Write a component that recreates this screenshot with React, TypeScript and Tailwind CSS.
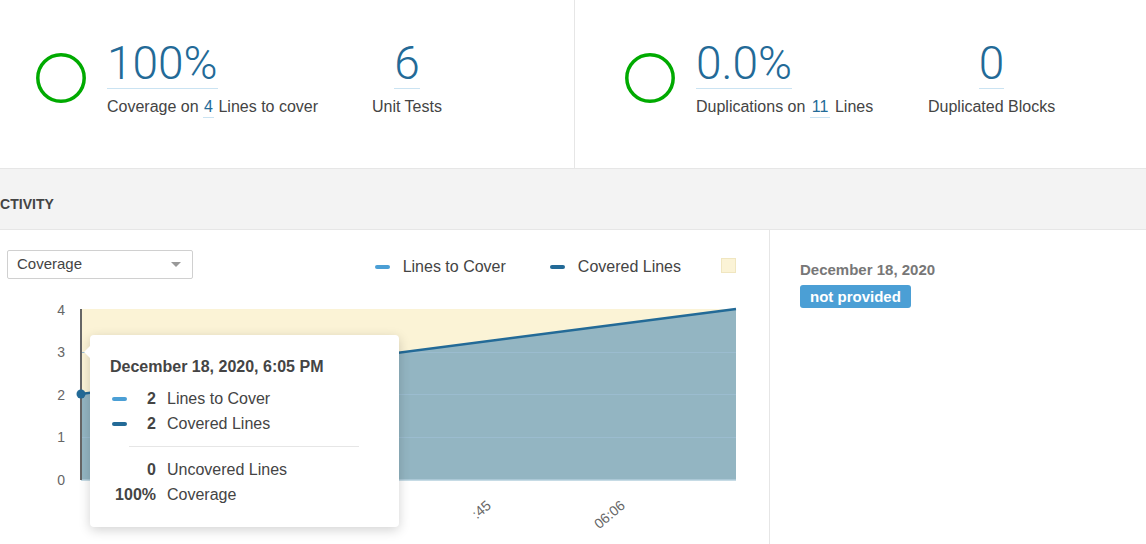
import React from "react";

function Ring() {
  return (
    <svg width="50" height="50" viewBox="0 0 50 50" className="shrink-0 mt-[13px]">
      <circle cx="25" cy="25" r="23.2" fill="none" stroke="#00aa00" strokeWidth="3.5" />
    </svg>
  );
}

function BigNum({ children }: { children: React.ReactNode }) {
  return (
    <div className="w-fit font-['Roboto',sans-serif] font-light text-[46px] leading-[46px] text-[#236a97] border-b border-[#cae3f2] pb-[2px]">
      {children}
    </div>
  );
}

function Dash({ color }: { color: string }) {
  return <span className="block w-[15px] h-[4px] rounded-[2px]" style={{ backgroundColor: color }} />;
}

export default function App() {
  const yLabels: [string, number][] = [
    ["4", 25],
    ["3", 67],
    ["2", 110],
    ["1", 152],
    ["0", 195],
  ];
  return (
    <div className="w-[1146px] h-[544px] overflow-hidden bg-white text-[#444] font-['Liberation_Sans',Arial,sans-serif]">
      {/* Top measures */}
      <div className="flex h-[169px] border-b border-[#e6e6e6]">
        <div className="w-[575px] shrink-0 border-r border-[#e6e6e6] flex items-start pt-[40px] pl-[36px]">
          <Ring />
          <div className="ml-[21px] w-[265px] shrink-0">
            <BigNum>100%</BigNum>
            <div className="mt-[8px] text-[16px] leading-[20px] whitespace-nowrap">
              Coverage on{" "}
              <span className="inline-block leading-[20px] px-[1px] text-[#236a97] border-b border-[#cae3f2]">4</span>{" "}
              Lines to cover
            </div>
          </div>
          <div className="flex flex-col items-center">
            <BigNum>6</BigNum>
            <div className="mt-[8px] text-[16px] leading-[20px] whitespace-nowrap">Unit Tests</div>
          </div>
        </div>
        <div className="flex-1 flex items-start pt-[40px] pl-[50px]">
          <Ring />
          <div className="ml-[21px] w-[232px] shrink-0">
            <BigNum>0.0%</BigNum>
            <div className="mt-[8px] text-[16px] leading-[20px] whitespace-nowrap">
              Duplications on{" "}
              <span className="inline-block leading-[20px] px-[2px] text-[#236a97] border-b border-[#cae3f2]">11</span>{" "}
              Lines
            </div>
          </div>
          <div className="flex flex-col items-center">
            <BigNum>0</BigNum>
            <div className="mt-[8px] text-[16px] leading-[20px] whitespace-nowrap">Duplicated Blocks</div>
          </div>
        </div>
      </div>

      {/* Activity header band */}
      <div className="h-[61px] bg-[#f3f3f3] border-b border-[#e6e6e6] pt-[26px]">
        <div className="-ml-[10px] text-[14px] font-bold leading-[18px] uppercase text-[#444]">Activity</div>
      </div>

      {/* Bottom */}
      <div className="flex h-[314px]">
        <div className="relative w-[770px] shrink-0 border-r border-[#e6e6e6]">
          <div className="flex items-start pt-[20px] pl-[7px] pr-[33px]">
            <div className="w-[186px] h-[29px] border border-[#d0d0d0] rounded-[2px] flex items-center pl-[9px] pr-[11px] text-[15px] text-[#444] bg-white">
              Coverage
              <span className="ml-auto w-0 h-0 border-x-[5px] border-x-transparent border-t-[5px] border-t-[#999]" />
            </div>
            <div className="ml-auto mt-[7px] flex items-center text-[16px] leading-[20px] text-[#444]">
              <Dash color="#4b9fd5" />
              <span className="ml-[13px]">Lines to Cover</span>
              <span className="ml-[44px]">
                <Dash color="#236a97" />
              </span>
              <span className="ml-[13px]">Covered Lines</span>
              <span className="ml-[40px] block w-[15px] h-[15px] bg-[#fbf3d6] border border-[#f0e6c0] -mt-[3px]" />
            </div>
          </div>

          <svg width="770" height="254" className="block mt-[11px]">
            {yLabels.map(([t, y]) => (
              <text key={t} x="65" y={y} textAnchor="end" fontSize="14" fill="#666" fontFamily="Liberation Sans, Arial, sans-serif">
                {t}
              </text>
            ))}
            <rect x="81" y="19" width="655" height="171" fill="#fbf3d6" />
            <polygon points="81,104 736,19 736,190 81,190" fill="#93b5c2" />
            <line x1="81" y1="62.5" x2="736" y2="62.5" stroke="#9bbccf" strokeWidth="1" />
            <line x1="81" y1="104.5" x2="736" y2="104.5" stroke="#9bbccf" strokeWidth="1" />
            <line x1="81" y1="147.5" x2="736" y2="147.5" stroke="#9bbccf" strokeWidth="1" />
            <line x1="81" y1="190" x2="736" y2="190" stroke="#b3cfdd" strokeWidth="1.5" />
            <line x1="81" y1="104" x2="736" y2="19" stroke="#236a97" strokeWidth="2.5" />
            <line x1="81" y1="19" x2="81" y2="190" stroke="#666" strokeWidth="2" />
            <circle cx="81" cy="104" r="4.5" fill="#236a97" />
            <text x="492" y="217" textAnchor="end" fontSize="14" fill="#666" fontFamily="Liberation Sans, Arial, sans-serif" transform="rotate(-40 492 217)">
              :45
            </text>
            <text x="626" y="217" textAnchor="end" fontSize="14" fill="#666" fontFamily="Liberation Sans, Arial, sans-serif" transform="rotate(-40 626 217)">
              06:06
            </text>
          </svg>

          {/* Tooltip */}
          <div className="absolute left-[90px] top-[105px] w-[309px] h-[192px] bg-white rounded-[4px] shadow-[0_3px_12px_rgba(0,0,0,0.18)] pt-[22px] pl-[20px]">
            <span className="absolute -left-[6px] top-[11px] w-0 h-0 border-y-[6px] border-y-transparent border-r-[6px] border-r-white" />
            <div className="text-[16px] leading-[20px] font-bold text-[#444] whitespace-nowrap">December 18, 2020, 6:05 PM</div>
            <div className="mt-[9px] ml-[2px] grid grid-cols-[44px_auto] gap-x-[11px] text-[16px] leading-[25px]">
              <div className="flex items-center justify-between">
                <Dash color="#4b9fd5" />
                <span className="font-bold">2</span>
              </div>
              <div>Lines to Cover</div>
              <div className="flex items-center justify-between">
                <Dash color="#236a97" />
                <span className="font-bold">2</span>
              </div>
              <div>Covered Lines</div>
            </div>
            <div className="mt-[10px] ml-[19px] w-[230px] h-px bg-[#e6e6e6]" />
            <div className="mt-[10px] ml-[2px] grid grid-cols-[44px_auto] gap-x-[11px] text-[16px] leading-[25px]">
              <div className="text-right font-bold">0</div>
              <div>Uncovered Lines</div>
              <div className="text-right font-bold">100%</div>
              <div>Coverage</div>
            </div>
          </div>
        </div>

        <div className="flex-1 pl-[30px] pt-[31px]">
          <div className="text-[15px] leading-[18px] font-bold text-[#777] whitespace-nowrap">December 18, 2020</div>
          <div className="mt-[6px] w-fit h-[23px] leading-[23px] px-[10px] text-[15px] font-bold text-white bg-[#4b9fd5] rounded-[3px]">
            not provided
          </div>
        </div>
      </div>
    </div>
  );
}
